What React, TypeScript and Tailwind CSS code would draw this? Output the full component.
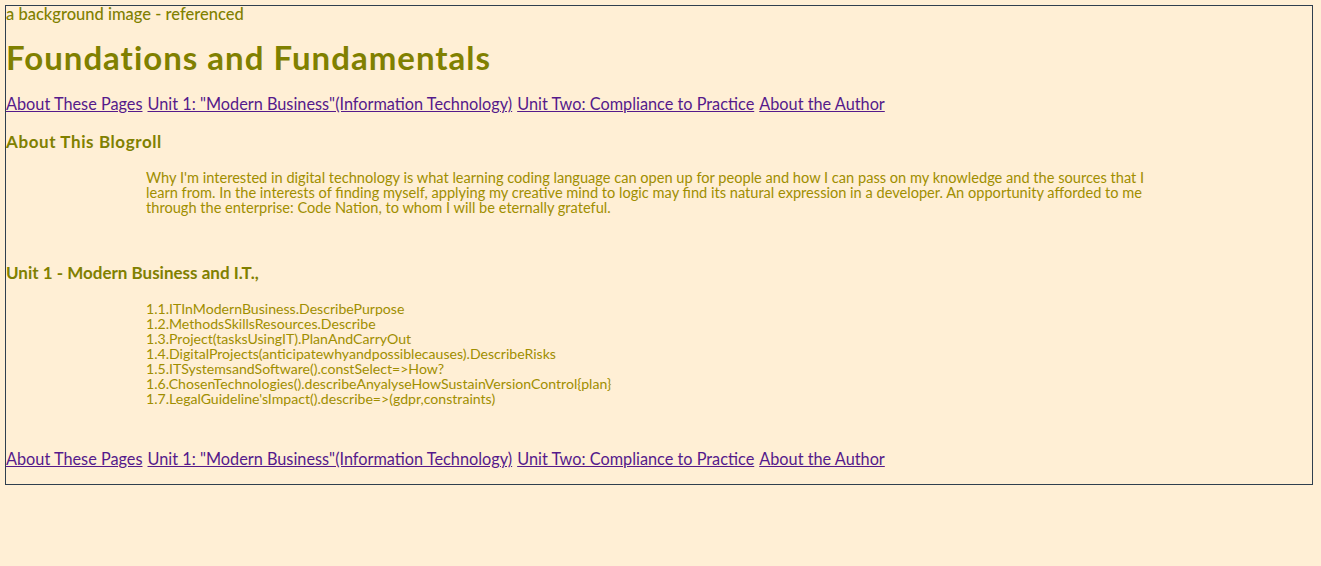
import React from "react";

const navLinks = [
  "About These Pages",
  'Unit 1: "Modern Business"(Information Technology)',
  "Unit Two: Compliance to Practice",
  "About the Author",
];

const unitItems = [
  "1.1.ITInModernBusiness.DescribePurpose",
  "1.2.MethodsSkillsResources.Describe",
  "1.3.Project(tasksUsingIT).PlanAndCarryOut",
  "1.4.DigitalProjects(anticipatewhyandpossiblecauses).DescribeRisks",
  "1.5.ITSystemsandSoftware().constSelect=>How?",
  "1.6.ChosenTechnologies().describeAnyalyseHowSustainVersionControl{plan}",
  "1.7.LegalGuideline'sImpact().describe=>(gdpr,constraints)",
];

const NavBar: React.FC = () => (
  <nav className="flex gap-[5px] text-[16.3px] leading-[20px]">
    {navLinks.map((label) => (
      <a key={label} href="#" className="text-[#551a8b] underline">
        {label}
      </a>
    ))}
  </nav>
);

const App: React.FC = () => {
  return (
    <div
      className="min-h-[566px] bg-[#ffefd5] pt-[5px] pl-[5px] text-[#808000]"
      style={{ fontFamily: "Lato, 'Open Sans', sans-serif" }}
    >
      <div className="w-[1308px] border border-[#2f3f4f] pb-[15px]">
        {/* Alt text of the missing image */}
        <p className="text-[16.5px] leading-[16px] font-medium">a background image - referenced</p>

        <h1 className="mt-[15px] text-[33px] leading-[40px] font-bold tracking-[1px]">
          Foundations and Fundamentals
        </h1>

        <div className="mt-[17px]">
          <NavBar />
        </div>

        <h3 className="mt-[17px] text-[17px] leading-[22px] font-bold tracking-[0.6px]">About This Blogroll</h3>

        {/* Intro paragraph */}
        <p className="mt-[17px] ml-[140px] text-[14.6px] leading-[15px] text-[#a08e00] whitespace-nowrap">
          Why I'm interested in digital technology is what learning coding language can open up for people and how I
          can pass on my knowledge and the sources that I
          <br />
          learn from. In the interests of finding myself, applying my creative mind to logic may find its natural
          expression in a developer. An opportunity afforded to me
          <br />
          through the enterprise: Code Nation, to whom I will be eternally grateful.
        </p>

        <h3 className="mt-[47px] text-[17px] leading-[22px] font-bold">Unit 1 - Modern Business and I.T.,</h3>

        <ul className="mt-[17px] ml-[140px] text-[14.1px] leading-[15px] text-[#a08e00]">
          {unitItems.map((item) => (
            <li key={item}>{item}</li>
          ))}
        </ul>

        <div className="mt-[43px]">
          <NavBar />
        </div>
      </div>
    </div>
  );
};

export default App;
